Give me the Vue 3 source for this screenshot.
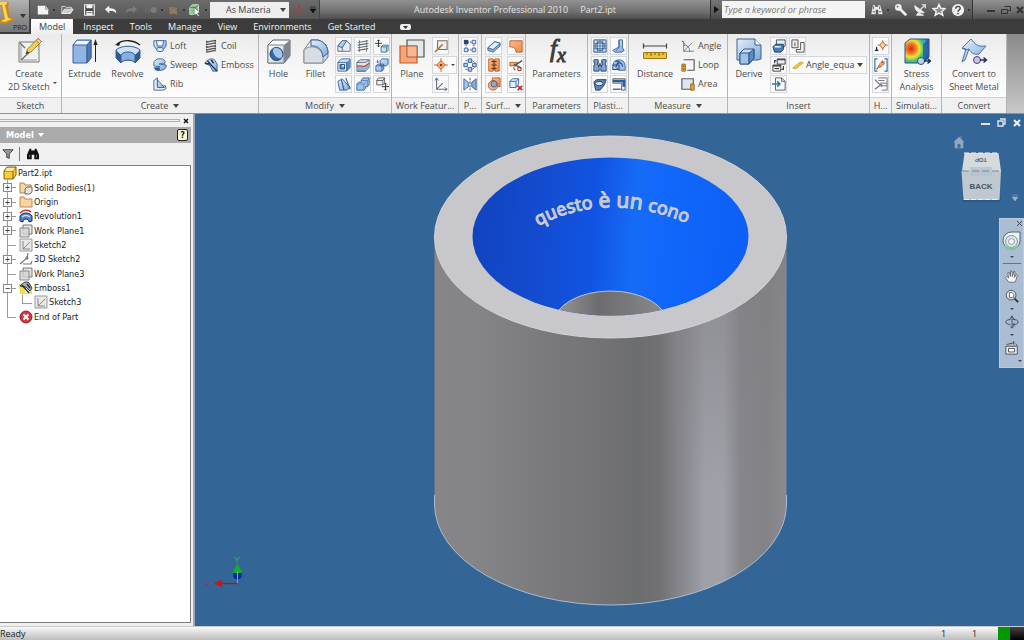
<script setup>
import { h } from 'vue'

const Icon = (props) =>
  h('svg', { class: 'icon', width: props.size || 16, height: props.size || 16, 'aria-hidden': 'true' }, [
    h('use', { href: '#i-' + props.name })
  ])
Icon.props = ['name', 'size']

const quick = ['new', 'open', 'save', 'undo', 'redo', 'link', 'update', 'select']
const tabs = ['Model', 'Inspect', 'Tools', 'Manage', 'View', 'Environments', 'Get Started']
const info = [
  ['find', 'Search'],
  ['key', 'Subscription'],
  ['dish', 'Communication'],
  ['star', 'Favorites'],
  ['help', 'Help']
]

const panels = [
  { id: 'sketch', title: 'Sketch', big: [{ icon: 'sketch', lines: ['Create', '2D Sketch'], drop: true }] },
  {
    id: 'create',
    title: 'Create',
    more: true,
    big: [
      { icon: 'extrude', lines: ['Extrude'] },
      { icon: 'revolve', lines: ['Revolve'] }
    ],
    rows: [
      ['loft', 'Loft'],
      ['sweep', 'Sweep'],
      ['rib', 'Rib'],
      ['coil', 'Coil'],
      ['emboss', 'Emboss']
    ]
  },
  {
    id: 'modify',
    title: 'Modify',
    more: true,
    big: [
      { icon: 'hole', lines: ['Hole'] },
      { icon: 'fillet', lines: ['Fillet'] }
    ],
    small: ['chamfer', 'shell', 'draft', 'thread', 'split', 'combine', 'move', 'copy', 'movebody']
  },
  {
    id: 'work',
    title: 'Work Featur...',
    big: [{ icon: 'plane', lines: ['Plane'] }],
    small: ['axis', 'point', 'ucs']
  },
  { id: 'pattern', title: 'P...', small: ['rect', 'circ', 'mirror'] },
  { id: 'surface', title: 'Surf...', more: true, small: ['thicken', 'stitch', 'sculpt', 'patch', 'trim', 'delface'] },
  { id: 'params', title: 'Parameters', big: [{ icon: 'fx', lines: ['Parameters'] }] },
  { id: 'plastic', title: 'Plasti...', small: ['grill', 'boss', 'rest', 'snap', 'rule', 'lip'] },
  {
    id: 'measure',
    title: 'Measure',
    more: true,
    big: [{ icon: 'distance', lines: ['Distance'] }],
    rows: [
      ['angle', 'Angle'],
      ['loop', 'Loop'],
      ['area', 'Area']
    ]
  },
  {
    id: 'insert',
    title: 'Insert',
    big: [{ icon: 'derive', lines: ['Derive'] }],
    small: ['place', 'objects', 'import'],
    combo: true
  },
  { id: 'harness', title: 'H...', small: ['pin', 'harn', 'props'] },
  { id: 'sim', title: 'Simulati...', big: [{ icon: 'stress', lines: ['Stress', 'Analysis'] }] },
  { id: 'convert', title: 'Convert', big: [{ icon: 'convert', lines: ['Convert to', 'Sheet Metal'] }] }
]

const tree = [
  { icon: 't-part', text: 'Part2.ipt', level: 0 },
  { icon: 't-solid', text: 'Solid Bodies(1)', level: 1, box: '+' },
  { icon: 't-folder', text: 'Origin', level: 1, box: '+' },
  { icon: 't-rev', text: 'Revolution1', level: 1, box: '+' },
  { icon: 't-plane', text: 'Work Plane1', level: 1, box: '+' },
  { icon: 't-sketch', text: 'Sketch2', level: 1 },
  { icon: 't-3d', text: '3D Sketch2', level: 1, box: '+' },
  { icon: 't-plane', text: 'Work Plane3', level: 1 },
  { icon: 't-emboss', text: 'Emboss1', level: 1, box: '-' },
  { icon: 't-sketch', text: 'Sketch3', level: 2 },
  { icon: 't-end', text: 'End of Part', level: 1, last: true }
]
</script>

<template>
  <div class="app">
    <svg class="defs" width="0" height="0" aria-hidden="true">
      <defs>
        <linearGradient id="gb" x1="0" y1="0" x2="1" y2="1"><stop offset="0" stop-color="#e4f0fb" /><stop offset="1" stop-color="#7ea8d8" /></linearGradient>
        <linearGradient id="gw" x1="0" y1="0" x2="1" y2="1"><stop offset="0" stop-color="#fff" /><stop offset="1" stop-color="#c4ccd6" /></linearGradient>
        <linearGradient id="go" x1="0" y1="0" x2="1" y2="1"><stop offset="0" stop-color="#f9bc90" /><stop offset="1" stop-color="#f08a4c" /></linearGradient>
        <radialGradient id="gs" cx=".25" cy=".4" r=".8"><stop offset="0" stop-color="#d8281c" /><stop offset=".25" stop-color="#ee7a22" /><stop offset=".45" stop-color="#f2e23a" /><stop offset=".65" stop-color="#4cc45e" /><stop offset=".82" stop-color="#2e9fd8" /><stop offset="1" stop-color="#2a4fb4" /></radialGradient>
      </defs>

      <symbol id="i-new" viewBox="0 0 16 16"><path d="M2 3h9l3 4v6H2z" fill="#f4f4f4" /><path d="M11 3v4h3" fill="none" stroke="#888" /></symbol>
      <symbol id="i-open" viewBox="0 0 16 16"><path d="M2 12V4h4l1 1h6v2" fill="none" stroke="#ddd" /><path d="M2 12l3-5h10l-3 5z" fill="#ccc" stroke="#f4f4f4" /></symbol>
      <symbol id="i-save" viewBox="0 0 16 16"><path d="M3 2h11v12H3z" fill="#444" stroke="#eee" stroke-width="1.4" /><path d="M5 2h7v4H5zM5 9h7v5H5z" fill="#f4f4f4" /><path d="M6 11h5" stroke="#555" /></symbol>
      <symbol id="i-undo" viewBox="0 0 16 16"><path d="M1 7l5-4v3c5 0 8 1 8 6-2-3-4-3-8-3v3z" fill="#f4f4f4" /></symbol>
      <symbol id="i-redo" viewBox="0 0 16 16"><path d="M14 7L9 3v3c-5 0-8 1-8 6 2-3 4-3 8-3v3z" fill="#7c7c7c" /></symbol>
      <symbol id="i-link" viewBox="0 0 16 16"><circle cx="4" cy="8" r="2.5" fill="none" stroke="#707070" /><circle cx="11" cy="8" r="3.5" fill="#7a7a7a" /></symbol>
      <symbol id="i-update" viewBox="0 0 16 16"><path d="M3 5l4-2 6 2v8H3z" fill="#80776a" stroke="#625848" /><path d="M3 5l10 8M13 5L5 13" stroke="#9a8767" /></symbol>
      <symbol id="i-select" viewBox="0 0 16 16"><path d="M2 5l3-3h7v8l-3 3H2z" fill="#8bc98a" stroke="#cfe8cf" /><path d="M2 5h7v8M9 5l3-3" fill="none" stroke="#3d8a3d" /><path d="M7 5l7 6-3 .3 2 3-1.500 1-2-3-2.500 1.500z" fill="#fff" stroke="#444" stroke-width=".6" /></symbol>
      <symbol id="i-find" viewBox="0 0 16 16"><path d="M3 2h3v2h3V2h3l3 11h-6V8H7v5H1z" fill="#eee" stroke="#444" stroke-width=".6" /><path d="M3 10h3M10 10h3M4 4v3M11 4v3" stroke="#555" /></symbol>
      <symbol id="i-key" viewBox="0 0 16 16"><circle cx="5" cy="5" r="3.800" fill="#eee" /><path d="M6 6l8 8" stroke="#eee" stroke-width="3" /><circle cx="4" cy="4" r="1" fill="#555" /></symbol>
      <symbol id="i-dish" viewBox="0 0 16 16"><path d="M2 3c0 6 5 9 11 8zM4 14l2-3 6 3z" fill="#eee" stroke="#eee" /><path d="M8 8l5-5M10 2h4v4" stroke="#eee" stroke-width="1.400" fill="none" /></symbol>
      <symbol id="i-star" viewBox="0 0 16 16"><path d="M8 1.500l2 4.500 5 .4-3.800 3.200L12.400 14 8 11.500 3.600 14l1.200-4.400L1 6.400 6 6z" fill="#888" stroke="#f4f4f4" stroke-width="1.600" /></symbol>
      <symbol id="i-help" viewBox="0 0 16 16"><circle cx="8" cy="8" r="7" fill="#f0f0f0" /><path d="M5.500 6.500C5.500 3 10.500 3 10.500 6c0 2-2.500 2-2.500 4" fill="none" stroke="#444" stroke-width="1.600" /><circle cx="8" cy="12" r="1" fill="#444" /></symbol>

      <symbol id="i-sketch" viewBox="0 0 28 28"><path d="M4 5h20v20H4z" fill="#f0f1f1" stroke="#777" /><path d="M6 8v15h16" fill="none" stroke="#999" /><path d="M6 23L20 10M5 6l5 5" stroke="#5b6e66" stroke-width="1.200" fill="none" /><path d="M11 17l1.500-5L23 1.500l3.500 3L16 15z" fill="#f7ce54" stroke="#876b28" stroke-width=".8" /><path d="M23 1.500l3.500 3-2 2-3.500-3z" fill="#f6d5a5" stroke="#876b28" stroke-width=".8" /><path d="M11 17l.8-3 2.500 1.800z" fill="#333" /></symbol>
      <symbol id="i-extrude" viewBox="0 0 28 28"><path d="M2 8l4-5h14v18l-4 5H2z" fill="#8fb5e2" stroke="#3d659e" /><path d="M3 8l3-4h13l-3 4z" fill="#edf5fd" /><path d="M16 8l4-5v18l-4 5z" fill="#4c78b4" stroke="#3d659e" /><path d="M2 8h14v18" fill="none" stroke="#3d659e" /><path d="M24.500 25V6" stroke="#222" /><path d="M24.500 2l-2 6h4z" fill="#222" /></symbol>
      <symbol id="i-revolve" viewBox="0 0 28 28"><path d="M2 13c5-5 19-5 24 0v8l-5 5c-1-4-13-4-14 0l-5-5z" fill="#cfe2f5" stroke="#345f99" /><path d="M7 18c2-4 12-4 14 0v8c-1-4-13-4-14 0z" fill="#89afdd" stroke="#345f99" /><path d="M2 13l5 5v8l-5-5zM26 13l-5 5v8l5-5z" fill="#315b96" /><path d="M3 7C10 2 20 3 26 8" fill="none" stroke="#222" stroke-width="1.300" /><path d="M1 8l6-4-2 5z" fill="#222" /></symbol>
      <symbol id="i-hole" viewBox="0 0 28 28"><path d="M3 8l5-5h17v16l-6 7H3z" fill="#fbfbfc" stroke="#56616f" /><path d="M3 8h16v18H3z" fill="url(#gw)" stroke="#7b8490" /><path d="M19 8l6-5v16l-6 7z" fill="#7e868f" /><circle cx="11.500" cy="17" r="6.500" fill="#3867a9" stroke="#1f4272" /><path d="M8 13c0 5 4 9 8 8 3-3 1-9-4-10-2 0-4 0-4 2z" fill="#a6c5e8" /></symbol>
      <symbol id="i-fillet" viewBox="0 0 28 28"><path d="M2 13L9 3h7c7 2 10 7 10 13v4l-5 6H2z" fill="url(#gw)" stroke="#707984" /><path d="M2 13c6-6 17-3 19 5v8H2z" fill="#d8dde4" stroke="#89919b" /><path d="M9 3h7c7 2 10 7 10 13l-5 4C20 13 16 8 9 9z" fill="url(#gb)" stroke="#345f99" /></symbol>
      <symbol id="i-plane" viewBox="0 0 28 28"><path d="M9 3h17v17H9z" fill="#e3e8ea" stroke="#4c5358" stroke-width="1.200" /><path d="M2 9h17v17H2z" fill="#f69a66" fill-opacity=".88" stroke="#c85c20" stroke-width="1.200" /><path d="M9 9h10v11H9z" fill="#fab68c" stroke="#7d4a34" stroke-width=".7" /></symbol>
      <symbol id="i-distance" viewBox="0 0 28 28"><path d="M3 9h22M2.500 6.500v5M25.500 6.500v5" stroke="#444" stroke-width="1.200" /><path d="M2.500 15.500h23v6h-23z" fill="#edc33c" stroke="#9e7a1a" /><path d="M6 16v2M10 16v3M14 16v2M18 16v3M22 16v2" stroke="#7a5d12" /></symbol>
      <symbol id="i-derive" viewBox="0 0 28 28"><path d="M2 2h18l6 6v14l-3 1H2z" fill="url(#gb)" stroke="#3e6188" /><path d="M20 2v6h6" fill="#fff" stroke="#3e6188" /><path d="M5 16l4-4h10v9l-5 6H5z" fill="#c7ddf4" stroke="#32578a" /><path d="M5 16h9v11H5z" fill="#a0c2e8" stroke="#32578a" /><path d="M14 16l5-4v9l-5 6z" fill="#5b88c0" stroke="#32578a" /></symbol>
      <symbol id="i-stress" viewBox="0 0 28 28"><path d="M2 6l5-4h19v18l-6 6H2z" fill="url(#gs)" stroke="#34518a" /><path d="M20 7l6-5v18l-6 6z" fill="#2455a0" opacity=".75" /><circle cx="18" cy="24" r="3.500" fill="#b9d2ec" stroke="#38517a" /><path d="M21 24h6M24.500 21.500L27.500 24l-3 2.500" fill="none" stroke="#16305a" stroke-width="1.500" /></symbol>
      <symbol id="i-convert" viewBox="0 0 28 28"><path d="M2 11L11 2c4 5 6 8 15 7l-7 8c-5 1-8-1-10-5L5 23l-3 2 4-13z" fill="url(#gb)" stroke="#4a71a6" /><path d="M2 11l4 2 3-1" fill="none" stroke="#4a71a6" /><circle cx="17" cy="23" r="3.500" fill="#cbc3ea" stroke="#483f86" /><path d="M20 23h6M23.500 20.500L26.500 23l-3 2.500" fill="none" stroke="#2e2766" stroke-width="1.500" /></symbol>

      <symbol id="i-loft" viewBox="0 0 16 16"><path d="M1 2h14v6l-4 5H5L1 8z" fill="url(#gb)" stroke="#345f99" /><path d="M4 2h8l-1 6H5z" fill="#fff" stroke="#345f99" /><ellipse cx="8" cy="12" rx="4" ry="2.500" fill="#d6e6f6" stroke="#345f99" /></symbol>
      <symbol id="i-sweep" viewBox="0 0 16 16"><path d="M1 6c0-6 11-7 13-2l-1 3c-3-2-6 0-6 0l8 1c1 5-5 7-10 6l-4-3c4 1 7 0 7-1L1 9z" fill="url(#gb)" stroke="#345f99" /><ellipse cx="5" cy="12.500" rx="3" ry="2" fill="#315b96" /></symbol>
      <symbol id="i-rib" viewBox="0 0 16 16"><path d="M1 4l4-3v9l9 0 1 3-3 2H1z" fill="#e6edf5" stroke="#345f99" /><path d="M5 3l8 9H5z" fill="url(#gb)" stroke="#345f99" /></symbol>
      <symbol id="i-coil" viewBox="0 0 16 16"><path d="M3 3.500l10-2M3 6.500l10-2M3 9.500l10-2M3 12.500l10-2M3 15l10-2" stroke="#555" stroke-width="1.500" /><path d="M3 2v13M13 1v13" stroke="#444" stroke-width="1.500" stroke-dasharray="2 1" /></symbol>
      <symbol id="i-emboss" viewBox="0 0 16 16"><path d="M1 6c3-5 8-6 11-4l3 5v8h-5L7 9z" fill="url(#gb)" stroke="#345f99" /><path d="M1 6l6 1 8 8M4 3l4 5M8 2l3 4" stroke="#1d3658" stroke-width="1.600" fill="none" /></symbol>
      <symbol id="i-chamfer" viewBox="0 0 16 16"><path d="M1 8l5-6h5l4 4v8H1z" fill="#e9edf2" stroke="#51627a" /><path d="M1 8l5-6h5L6 10z" fill="url(#gb)" stroke="#345f99" /><path d="M6 10v4" stroke="#51627a" /></symbol>
      <symbol id="i-thread" viewBox="0 0 16 16"><path d="M4 1v14M12 1v14" stroke="#888" /><path d="M2 4l12-2M2 7l12-2M2 10l12-2M2 13l12-2" stroke="#626b76" stroke-width="1.200" /></symbol>
      <symbol id="i-move" viewBox="0 0 16 16"><path d="M4 1v8M0 5h8M2.500 2.500L4 1l1.500 1.500M2.500 7.500L4 9l1.500-1.500" stroke="#222" fill="none" /><path d="M7 9l2-2h6v6l-2 2H7z" fill="#c8e4f0" stroke="#32768e" /><path d="M7 9h6v6M13 9l2-2" fill="none" stroke="#32768e" /></symbol>
      <symbol id="i-shell" viewBox="0 0 16 16"><path d="M1 5l4-4h10v10l-4 4H1z" fill="#d5e4f5" stroke="#345f99" /><path d="M11 5l4-4v10l-4 4z" fill="#5b88c0" /><path d="M1 5h10v10" fill="none" stroke="#345f99" /><path d="M3.500 7.500h5v5h-5z" fill="#5f8cc6" stroke="#1f4272" /><path d="M6 8h2v2H6z" fill="#fff" /></symbol>
      <symbol id="i-split" viewBox="0 0 16 16"><path d="M1 5l4-3h10v9l-4 4H1z" fill="#dfe5ec" stroke="#51627a" /><path d="M1 11c4-3 6 1 10-1l4-4v5l-4 4H1z" fill="#8db3dd" /><path d="M1 10c4-3 6 1 10-1l4-3" fill="none" stroke="#c04c30" stroke-width="1.500" /><path d="M1 5h10l4-3M1 15h10" fill="none" stroke="#51627a" /></symbol>
      <symbol id="i-copy" viewBox="0 0 16 16"><path d="M6 3l2-2h7v6l-2 2H6zM1 9l2-2h7v6l-2 2H1z" fill="url(#gb)" stroke="#345f99" /><path d="M1 9h7v6M8 9l2-2M3 2v3M1.500 4L3 5.500 4.500 4" fill="none" stroke="#345f99" /></symbol>
      <symbol id="i-draft" viewBox="0 0 16 16"><path d="M1 5l5-3 9 10-4 3H3z" fill="url(#gb)" stroke="#345f99" /><path d="M5 3l3 12M10 1l5 13" stroke="#345f99" stroke-width="1.300" /></symbol>
      <symbol id="i-combine" viewBox="0 0 16 16"><path d="M1 8l2-2h3V4l2-3h7v8l-2 2h-2v2l-2 2H1z" fill="#a2c3e8" stroke="#345f99" /><path d="M1 8h8v7M6 4h7v7M9 8l2-2M13 4l2-2" fill="none" stroke="#345f99" opacity=".6" /></symbol>
      <symbol id="i-movebody" viewBox="0 0 16 16"><path d="M2 4l2-3h7v6l-2 2H2z" fill="#f3f3f3" stroke="#555" /><path d="M2 4h7v5M9 4l2-3" stroke="#555" fill="none" /><path d="M12 7v8M8 11h8M10.500 8.500L12 7l1.500 1.500M10.500 13.500L12 15l1.500-1.500" stroke="#222" fill="none" /></symbol>
      <symbol id="i-axis" viewBox="0 0 16 16"><path d="M4 2h11v10H4z" fill="#f1ede9" stroke="#73706c" stroke-width="1.200" /><path d="M1 15L10 6" stroke="#a97657" stroke-width="1.800" /></symbol>
      <symbol id="i-point" viewBox="0 0 16 16"><path d="M8 0v16M0 8h16" stroke="#cc5b1c" /><path d="M8 3l5 5-5 5-5-5z" fill="#f6b27e" stroke="#b8541c" /><circle cx="8" cy="8" r="1.500" fill="#8a3b10" /></symbol>
      <symbol id="i-ucs" viewBox="0 0 16 16"><path d="M3 1v13h12M3 14l7-7" fill="none" stroke="#667" stroke-width="1.200" /><path d="M1 4l2-3 2 3M12 12l3 2-3 2" fill="none" stroke="#3d6b93" /></symbol>
      <symbol id="i-rect" viewBox="0 0 16 16"><path d="M5 3.500h6M5 12.500h6M3.500 6v4M12.500 6v4" stroke="#446" stroke-dasharray="2 1" /><path d="M1 1h5v5H1z" fill="#24477c" /><path d="M10.500 1.500h4v4h-4zM1.500 10.500h4v4h-4zM10.500 10.500h4v4h-4z" fill="#d5e5f6" stroke="#345f99" /></symbol>
      <symbol id="i-circ" viewBox="0 0 16 16"><g fill="#b4d0ee" stroke="#27508b"><path d="M6 1h4v4H6zM6 11h4v4H6zM1 6h4v4H1zM11 6h4v4h-4z" /><path d="M3 3l2 0M11 3l2 2M3 13l2 0M11 13l2-2" /></g></symbol>
      <symbol id="i-mirror" viewBox="0 0 16 16"><path d="M1 2l5 4v5l-5 4z" fill="#a8c8ea" stroke="#345f99" /><path d="M15 2l-5 4v5l5 4z" fill="#86add9" stroke="#345f99" /><path d="M8 1v14" stroke="#444" stroke-dasharray="3 1" /></symbol>
      <symbol id="i-thicken" viewBox="0 0 16 16"><path d="M1 10l8-7 6 2v3l-8 7-6-2z" fill="#8fb5e2" stroke="#345f99" /><path d="M1 10l8-7 6 2-8 7z" fill="#e3effa" stroke="#345f99" /></symbol>
      <symbol id="i-patch" viewBox="0 0 16 16"><path d="M1 2h14v13H8c0-4-2-6-7-6z" fill="url(#go)" stroke="#b65a22" /></symbol>
      <symbol id="i-stitch" viewBox="0 0 16 16"><path d="M2 1h5v14H2zM9 1h5v14H9z" fill="url(#go)" stroke="#b65a22" /><path d="M5 4h6M5 8h6M5 12h6M8 2v12" stroke="#5e2b0e" /></symbol>
      <symbol id="i-trim" viewBox="0 0 16 16"><path d="M1 5h9l-2 4H1z" fill="url(#go)" stroke="#b65a22" /><path d="M6 9l9-6M6 7l8 5" stroke="#555" stroke-width="1.600" /><circle cx="12" cy="12.500" r="2" fill="none" stroke="#b03c22" stroke-width="1.300" /><path d="M5 11l2 3" stroke="#b03c22" stroke-width="1.300" /></symbol>
      <symbol id="i-sculpt" viewBox="0 0 16 16"><path d="M6 1h9v10H6z" fill="url(#go)" stroke="#b65a22" /><circle cx="7" cy="9.500" r="5.500" fill="#f4ae80" stroke="#b65a22" /><circle cx="8" cy="8" r="3.500" fill="#8fa9ce" stroke="#345f99" /></symbol>
      <symbol id="i-delface" viewBox="0 0 16 16"><path d="M1 5l3-3h7v6l-3 4H1z" fill="#e2eefa" stroke="#345f99" /><path d="M1 5h7v7M8 5l3-3" fill="none" stroke="#345f99" /><path d="M10 10l5 5M15 10l-5 5" stroke="#c22" stroke-width="2" /></symbol>
      <symbol id="i-grill" viewBox="0 0 16 16"><path d="M1 1h14v14H1z" fill="#cfe0f3" stroke="#24477c" /><circle cx="8" cy="8" r="5" fill="none" stroke="#24477c" /><path d="M1 5h14M1 8h14M1 11h14M5 1v14M8 1v14M11 1v14" stroke="#345f99" stroke-width=".8" /></symbol>
      <symbol id="i-boss" viewBox="0 0 16 16"><path d="M1 2h5v3H5v3h2v7H1V8h1V5H1zM10 2h5v3h-1v3h1v7H9V8h2V5h-1z" fill="#7fa6d6" stroke="#1f4272" /><path d="M6 5l4 5M10 5l-4 5" stroke="#222" /></symbol>
      <symbol id="i-rest" viewBox="0 0 16 16"><path d="M1 6l3-3h11l-2 6-5 6H3z" fill="#5d86bd" stroke="#1f3a62" /><ellipse cx="7" cy="7.500" rx="4.500" ry="2.500" fill="#d3e3f4" stroke="#1f3a62" /></symbol>
      <symbol id="i-snap" viewBox="0 0 16 16"><path d="M8 1h4v9l2 3-3 2H3l-2-2 7-4z" fill="url(#gb)" stroke="#345f99" /><path d="M8 1v9l-4 4" stroke="#345f99" fill="none" /></symbol>
      <symbol id="i-rule" viewBox="0 0 16 16"><path d="M1 8C2 0 15 0 15 9v5H8z" fill="#a2c3e8" stroke="#345f99" /><path d="M5 10c0-6 7-6 7 0M1 8h7v6M1 8v5h7M4 3l5 2" fill="none" stroke="#27508b" stroke-width="1.300" /></symbol>
      <symbol id="i-lip" viewBox="0 0 16 16"><path d="M1 2h14v13h-4V7H1z" fill="#e8eef6" stroke="#555" /><path d="M1 3h14v3H1zM12 6h3v5h-3z" fill="#2c5da3" /><path d="M1 14h9" stroke="#555" stroke-width="1.500" /></symbol>
      <symbol id="i-angle" viewBox="0 0 16 16"><path d="M3 2v12h12M3 14L13 4" fill="none" stroke="#778" /><path d="M3 7c4 0 7 3 7 7M1 2l6 6" fill="none" stroke="#555" stroke-dasharray="2 1" /></symbol>
      <symbol id="i-loop" viewBox="0 0 16 16"><path d="M3 2h12v12H7" fill="none" stroke="#556" stroke-width="1.300" /><path d="M1 7h4v8H1z" fill="#e5a73a" stroke="#8b5f15" /><path d="M2 9.500h2M2 12.500h2" stroke="#6b4810" /></symbol>
      <symbol id="i-area" viewBox="0 0 16 16"><path d="M1 2h13v12H1z" fill="#dfe6ee" stroke="#556" stroke-width="1.300" /><path d="M11 8h4v7h-4z" fill="#e5a73a" stroke="#8b5f15" /></symbol>
      <symbol id="i-place" viewBox="0 0 16 16"><path d="M5 1h10v7l-3 2H5z" fill="#e2eefa" stroke="#345" /><path d="M1 9l3-3h9v6l-3 3H3z" fill="#4a7bb8" stroke="#1f3a62" /><path d="M3 9h7" stroke="#fff" stroke-width="1.500" /></symbol>
      <symbol id="i-ifeat" viewBox="0 0 16 16"><path d="M1 1h7v9H1z" fill="#eee" stroke="#444" /><path d="M4.500 4v4" stroke="#333" /><path d="M11 4h4v11H6v-3h5z" fill="#f6f6f6" stroke="#444" /></symbol>
      <symbol id="i-objects" viewBox="0 0 16 16"><path d="M6 1h9v6H6zM1 8h9v7H1z" fill="#eee" stroke="#333" /><path d="M1 9h9M6 2h9M3 12h5M13 9v4h-2M3 6V3h2" stroke="#333" fill="none" stroke-width="1.300" /></symbol>
      <symbol id="i-import" viewBox="0 0 16 16"><path d="M4 1h7l4 4v10H4z" fill="#f6f6f6" stroke="#556" /><path d="M11 1v4h4" fill="none" stroke="#556" /><path d="M0 8h8M6 5l3 3-3 3" fill="none" stroke="#247bb8" stroke-width="1.800" /></symbol>
      <symbol id="i-pencil" viewBox="0 0 16 16"><path d="M1 12l10-8 4 1-10 8z" fill="#f2c83a" stroke="#c79a1e" /></symbol>
      <symbol id="i-pin" viewBox="0 0 16 16"><path d="M10 1v12M4 7h12" stroke="#c96a36" /><path d="M10 3l3.500 4-3.500 4-3.500-4z" fill="#f6d0b4" stroke="#b8541c" /><path d="M3 9v4M1 13h4" stroke="#222" stroke-width="1.400" /></symbol>
      <symbol id="i-harn" viewBox="0 0 16 16"><path d="M4 1H1v14h3M12 1h3v14h-3" fill="none" stroke="#24749a" stroke-width="1.300" /><path d="M3 13l7-10M7 7l5-3M6 11l6-5" stroke="#b8541c" stroke-width="1.300" /><circle cx="8" cy="7" r="2" fill="#f0a070" /></symbol>
      <symbol id="i-props" viewBox="0 0 16 16"><path d="M5 1h10v14H9M5 4h7M7 7h8M8 10h7" stroke="#667" fill="none" /><path d="M1 3l8 8M1 14l8-6" stroke="#777a8c" stroke-width="1.600" /></symbol>

      <symbol id="i-t-part" viewBox="0 0 14 14"><path d="M1 5l3-4h9v8l-3 4H1z" fill="#f8cf3a" stroke="#7b6212" /><path d="M1 5h9v8M10 5l3-4" fill="none" stroke="#7b6212" /><path d="M2 5l2-3h8l-2 3z" fill="#fdeb9a" /></symbol>
      <symbol id="i-t-solid" viewBox="0 0 14 14"><path d="M1 12V2h4l1 2h6v8z" fill="#f5d9a4" stroke="#a98347" /><path d="M6 8l2-2h5v5l-2 2H6z" fill="#e8e6da" stroke="#667" /></symbol>
      <symbol id="i-t-folder" viewBox="0 0 14 14"><path d="M1 12V2h4l1 2h7v8z" fill="#f7d3a0" stroke="#b98a50" /></symbol>
      <symbol id="i-t-rev" viewBox="0 0 14 14"><path d="M1 7c2-4 10-4 12 0v5l-3 1c0-4-6-4-6 0l-3-1z" fill="#4f83c6" stroke="#1a315c" /><path d="M3 8c2-2 6-2 8 0" stroke="#c8dcf2" stroke-width="1.500" fill="none" /><path d="M1 4c3-3 8-4 11-1" stroke="#c3312a" stroke-width="1.600" fill="none" /></symbol>
      <symbol id="i-t-plane" viewBox="0 0 14 14"><path d="M4 1h9v9H4z" fill="#e4e4e4" stroke="#777" /><path d="M1 4h9v9H1z" fill="#d5d5d5" fill-opacity=".8" stroke="#888" /></symbol>
      <symbol id="i-t-sketch" viewBox="0 0 14 14"><path d="M1 1h12v12H1z" fill="#e8e8e8" stroke="#999" /><path d="M4 3v8h7M4 11l7-7" fill="none" stroke="#888" /></symbol>
      <symbol id="i-t-3d" viewBox="0 0 14 14"><path d="M1 12l7-6 1-5M4 12h8l1-3" fill="none" stroke="#777" stroke-width="1.200" /><circle cx="8" cy="6" r="1.500" fill="#777" /></symbol>
      <symbol id="i-t-emboss" viewBox="0 0 14 14"><path d="M0 3h4l3 10H1zM7 13h6V9z" fill="#f4dd3c" /><path d="M1 5c3-4 7-5 9-3l3 5-2 3-4-4z" stroke="#333" fill="#a9b4bf" /><path d="M3 4l7 8M8 3l3 4" stroke="#222" stroke-width="1.300" /></symbol>
      <symbol id="i-t-end" viewBox="0 0 14 14"><circle cx="7" cy="7" r="6" fill="#cf3745" stroke="#8a2530" /><path d="M4.500 4.500l5 5M9.500 4.500l-5 5" stroke="#fff" stroke-width="2" /></symbol>

      <symbol id="i-filter" viewBox="0 0 14 14"><path d="M1 2h12L8.500 7v5l-3-1V7z" fill="#999" stroke="#333" /></symbol>
      <symbol id="i-bino" viewBox="0 0 14 14"><path d="M3 1h2v2h4V1h2l3 7v5H8.500V8h-3v5H0V8z" fill="#111" /><path d="M3 8v3M11 8v3" stroke="#888" /></symbol>

      <symbol id="i-wheel" viewBox="0 0 20 20"><path d="M10 1h8v9a8.500 8.500 0 1 1-8-9z" fill="#eef2f4" stroke="#51616f" /><circle cx="9.500" cy="10.500" r="6" fill="#dfe7ea" stroke="#7b8d95" /><circle cx="9.500" cy="10.500" r="3" fill="#eef3f4" stroke="#8d9da4" /><path d="M3 15c3 4 10 4 13 0" stroke="#7fc48a" stroke-width="2" fill="none" /></symbol>
      <symbol id="i-hand" viewBox="0 0 16 16"><path d="M5 14L1.500 9l1-1L5 9.500 4 4l1.300-.5L7 8V2h1.500l.5 6 1.500-5.500 1.300.5-.8 6 2-3 1.200.7-2.200 7.300z" fill="#f6f8fa" stroke="#444" stroke-width=".7" /></symbol>
      <symbol id="i-zoom" viewBox="0 0 16 16"><circle cx="7" cy="7" r="5.500" fill="#e8eef3" stroke="#444" /><path d="M5 4h3l2 2v4H5z" fill="#fff" stroke="#555" /><path d="M11 11l4 4" stroke="#333" stroke-width="2.200" /></symbol>
      <symbol id="i-orbit" viewBox="0 0 16 16"><path d="M8 1v14M5 6l3-5 3 5M6 13l2 2 2-2" fill="none" stroke="#445" /><path d="M9 5c8 0 8 6 0 6M11 9l-2 2 2 2M6 5c-7 1-7 5 0 6" fill="none" stroke="#445" /></symbol>
      <symbol id="i-look" viewBox="0 0 16 16"><path d="M1 6h13v9H1z" fill="#e8eef3" stroke="#444" /><path d="M4 8.500h7v4H4z" fill="#fff" stroke="#444" /><path d="M2 4l8-2M10 0v4M12 3l2 2" stroke="#444" fill="none" /></symbol>
    </svg>

    <header class="top">
      <button class="appbtn" aria-label="Application menu">
        <svg width="29" height="32" viewBox="0 0 29 32" aria-hidden="true">
          <path d="M0 2h8l1 2-1 2 2 11 3 1v3l-8 3-5-1v-3l4-2L1 6H0z" fill="#c98714" />
          <path d="M0 2h7v2L5 5l3 13 4 1-7 3-4-1 4-2L2 5H0z" fill="#fbd266" />
          <path d="M20 14h6l-3 4z" fill="#333" />
        </svg>
        <span>PRO</span>
      </button>
      <div class="titlebar">
        <div class="qat">
          <button v-for="q in quick" :key="q" :aria-label="q"><Icon :name="q" size="14" /><i v-if="q !== 'open' && q !== 'save' && q !== 'undo' && q !== 'redo'" class="dot"></i></button>
          <div class="drop mat"><select aria-label="Material"><option>As Materia</option></select><i class="arrow"></i></div>
          <button class="cross" aria-label="Adjust">
            <svg width="12" height="12" viewBox="0 0 12 12"><path d="M6 0v12M0 6h12" stroke="#8f4a45" stroke-width="2" stroke-dasharray="5 2" /></svg>
          </button>
          <button class="cust" aria-label="Customize">
            <svg width="8" height="8" viewBox="0 0 8 8"><path d="M1 1h6M1 3h6L4 7z" fill="#111" stroke="#111" stroke-width=".6" /></svg>
          </button>
        </div>
        <h1><span>Autodesk Inventor Professional 2010</span><span>Part2.ipt</span></h1>
        <div class="info">
          <button class="tri" aria-label="Collapse search"><svg width="5" height="7" viewBox="0 0 5 7"><path d="M0 0l5 3.500L0 7z" fill="#111" /></svg></button>
          <input type="text" aria-label="Search" placeholder="Type a keyword or phrase" />
          <button v-for="i in info" :key="i[0]" :aria-label="i[1]" :class="i[0]"><Icon :name="i[0]" size="14" /><i v-if="i[0] === 'find' || i[0] === 'help'" class="dot"></i></button>
        </div>
        <div class="wc">
          <button aria-label="Minimize"><svg width="9" height="9" viewBox="0 0 9 9"><path d="M0 6h8" stroke="#333" stroke-width="2" /></svg></button>
          <button aria-label="Restore"><svg width="10" height="10" viewBox="0 0 10 10"><path d="M3.500 1.500h6v4h-3M.5 4.500h6v4h-6z" fill="none" stroke="#333" /></svg></button>
          <button aria-label="Close"><svg width="8" height="8" viewBox="0 0 8 8"><path d="M1 1l6 6M7 1L1 7" stroke="#333" stroke-width="2" /></svg></button>
        </div>
      </div>
      <nav class="tabs">
        <button v-for="(t, i) in tabs" :key="t" :class="{ on: i === 0 }">{{ t }}</button>
        <button class="min" aria-label="Minimize ribbon"><svg width="11" height="6" viewBox="0 0 11 6"><rect width="11" height="6" rx="2" fill="#eee" /><path d="M3 2h5L5.500 5z" fill="#333" /></svg></button>
      </nav>
    </header>

    <div class="ribbon">
      <section v-for="p in panels" :key="p.id" :class="['panel', p.id]">
        <div class="body">
          <button v-for="b in p.big" :key="b.icon" :class="['big', b.icon]">
            <svg v-if="b.icon === 'fx'" width="28" height="28" viewBox="0 0 28 28" aria-hidden="true"><text x="7" y="20" font-size="25">f</text><text x="14" y="25" font-size="20">x</text></svg>
            <Icon v-else :name="b.icon" size="28" />
            <span v-for="l in b.lines" :key="l">{{ l }}</span>
            <i v-if="b.drop" class="arrow"></i>
          </button>
          <div v-if="p.rows" class="rows">
            <button v-for="r in p.rows" :key="r[0]"><Icon :name="r[0]" size="14" /><span>{{ r[1] }}</span></button>
          </div>
          <div v-if="p.small" class="smalls">
            <button v-for="s in p.small" :key="s" :aria-label="s" :class="s"><Icon :name="s" size="14" /><i v-if="s === 'point'" class="arrow"></i></button>
          </div>
          <div v-if="p.combo" class="combo">
            <button aria-label="Insert iFeature" class="sq"><Icon name="ifeat" size="14" /></button>
            <div class="drop pick"><Icon name="pencil" size="12" /><select aria-label="iMate"><option>Angle_equa</option></select><i class="arrow"></i></div>
          </div>
        </div>
        <h2>{{ p.title }}<i v-if="p.more" class="arrow"></i></h2>
      </section>
      <div class="rest-fill"></div>
    </div>

    <main>
      <aside>
        <div class="grip"><span></span><button aria-label="Close browser"><svg width="6" height="6" viewBox="0 0 6 6"><path d="M1 1l4 4M5 1L1 5" stroke="#111" stroke-width="1.500" /></svg></button></div>
        <div class="mhead"><button class="mtitle">Model<i class="arrow"></i></button><button class="q" aria-label="Help">?</button></div>
        <div class="mtools">
          <button aria-label="Filter"><Icon name="filter" size="12" /></button>
          <button aria-label="Find"><Icon name="bino" size="12" /></button>
        </div>
        <div class="treebox">
          <ul class="tree">
            <li v-for="n in tree" :key="n.text" :class="['l' + n.level, { last: n.last }]">
              <button v-if="n.box" class="box" :aria-label="n.text">{{ n.box === '+' ? '+' : '−' }}</button>
              <Icon :name="n.icon" size="14" /><span>{{ n.text }}</span>
            </li>
          </ul>
        </div>
      </aside>

      <div class="view">
        <svg class="scene" viewBox="195 114 829 512" role="img" aria-label="Hollow cone part">
          <defs>
            <linearGradient id="side" x1="0" x2="1">
              <stop offset="0" stop-color="#868688" /><stop offset=".12" stop-color="#858587" /><stop offset=".3" stop-color="#7b7b7d" /><stop offset=".45" stop-color="#747477" /><stop offset=".58" stop-color="#6c6d6f" /><stop offset=".64" stop-color="#717174" /><stop offset=".7" stop-color="#86868d" /><stop offset=".77" stop-color="#a0a0a9" /><stop offset=".82" stop-color="#a0a0a9" /><stop offset=".87" stop-color="#86868b" /><stop offset=".94" stop-color="#828287" /><stop offset="1" stop-color="#8b8b90" />
            </linearGradient>
            <linearGradient id="shade" x1="0" y1="0" x2="0" y2="1"><stop offset="0" stop-color="#808084" stop-opacity=".7" /><stop offset="1" stop-color="#808084" stop-opacity="0" /></linearGradient>
            <linearGradient id="cone" x1="0" x2="1" y2=".04">
              <stop offset="0" stop-color="#1143bd" /><stop offset=".25" stop-color="#134bcf" /><stop offset=".46" stop-color="#1154e2" /><stop offset=".6" stop-color="#166bf6" /><stop offset=".7" stop-color="#1268fb" /><stop offset="1" stop-color="#0d5ff6" />
            </linearGradient>
            <linearGradient id="bore" x1="0" x2="1"><stop offset="0" stop-color="#98989a" /><stop offset=".4" stop-color="#6c6c6e" /><stop offset="1" stop-color="#8b8b8c" /></linearGradient>
            <clipPath id="mouth"><ellipse cx="610.500" cy="236.500" rx="138" ry="79" /></clipPath>
          </defs>
          <path d="M434.500 237V504a176 101 0 0 0 352 0V237z" fill="url(#side)" />
          <path d="M679 237h107v250H679z" fill="url(#shade)" />
          <path d="M434.500 495v9a176 101 0 0 0 352 0v-9" fill="none" stroke="#a9bccf" />
          <ellipse cx="610.500" cy="237" rx="176" ry="101" fill="#c7c7cc" stroke="#d5d5d6" />
          <ellipse cx="610.500" cy="236.500" rx="138" ry="79" fill="url(#cone)" />
          <ellipse cx="610.500" cy="324" rx="57" ry="33" fill="url(#bore)" stroke="#b9c3d8" clip-path="url(#mouth)" />
          <path id="arc" d="M538 226Q612 187 700 229" fill="none" />
          <text class="carve"><textPath href="#arc"><tspan font-size="18">questo</tspan><tspan font-size="21"> è un </tspan><tspan font-size="18">cono</tspan></textPath></text>
        </svg>

        <div class="docwc">
          <button aria-label="Minimize document"><svg width="9" height="9" viewBox="0 0 9 9"><path d="M0 6h9" stroke="#dde6ee" stroke-width="2" /></svg></button>
          <button aria-label="Restore document"><svg width="9" height="9" viewBox="0 0 9 9"><path d="M3 1h5v5H6M1 3h5v5H1z" fill="none" stroke="#dde6ee" stroke-width="1.400" /></svg></button>
          <button aria-label="Close document"><svg width="8" height="8" viewBox="0 0 8 8"><path d="M1 1l6 6M7 1L1 7" stroke="#eef3f7" stroke-width="2" /></svg></button>
        </div>

        <svg class="cube" width="72" height="76" viewBox="948 130 72 76" role="img" aria-label="View cube">
          <path d="M954 142l5-5 5 5h-1v6h-8v-6zM961 136v3" fill="#8ea7c0" stroke="#8ea7c0" stroke-width=".6" />
          <path d="M957.500 144h3v4h-3z" fill="#4a6f96" />
          <path d="M963 202l-1-6h39l-1 6z" fill="#27507c" opacity=".6" />
          <path d="M964.500 153h34l2.500 18h-39z" fill="#d4dade" />
          <path d="M961.500 171H1001l-1.500 29h-36z" fill="#c0c9d1" />
          <path d="M970 167h22v9h-22z" fill="#b4c0cb" opacity=".8" />
          <path d="M962 171h38" stroke="#76889a" stroke-dasharray="7 3" />
          <path d="M964 153h35M964 199.500h35" stroke="#eef2f4" stroke-dasharray="5 2" fill="none" />
          <text x="981" y="189" text-anchor="middle" font-size="8" font-weight="bold" fill="#4a545e">BACK</text>
          <text x="-981" y="-158" transform="rotate(180)" text-anchor="middle" font-size="6" font-weight="bold" fill="#59646e">TOP</text>
          <path d="M1012 195h6M1012 197h6l-3 4z" fill="#9db3ca" stroke="#9db3ca" stroke-width=".5" />
        </svg>

        <div class="navbar">
          <button class="nx" aria-label="Close navigation bar"><svg width="5" height="5" viewBox="0 0 5 5"><path d="M0 0l5 5M5 0L0 5" stroke="#445" /></svg></button>
          <button aria-label="Steering wheel"><Icon name="wheel" size="20" /></button>
          <i class="arrow"></i>
          <hr />
          <button aria-label="Pan"><Icon name="hand" size="15" /></button>
          <button aria-label="Zoom"><Icon name="zoom" size="14" /></button>
          <i class="arrow"></i>
          <button aria-label="Orbit"><Icon name="orbit" size="14" /></button>
          <i class="arrow"></i>
          <button aria-label="Look at"><Icon name="look" size="14" /></button>
          <i class="arrow end"></i>
        </div>

        <svg class="triad" width="44" height="34" viewBox="203 554 44 34" role="img" aria-label="Axes">
          <path d="M237 583.500h-16" stroke="#9c1c26" stroke-width="1.400" />
          <path d="M214 583.500l8-4v8z" fill="#d01414" />
          <text x="205" y="587" font-size="8" fill="#a8323e">X</text>
          <circle cx="237.500" cy="575" r="4.500" fill="#0b2f9a" />
          <path d="M237.500 563l5 10h-10z" fill="#17a82e" />
          <path d="M237.500 571v12" stroke="#7fa9b4" />
          <text x="234" y="563" font-size="9" fill="#2fae6c">Y</text>
        </svg>
      </div>
    </main>

    <footer>
      <span>Ready</span>
      <span class="n">1</span>
      <span class="n">1</span>
      <i class="green"></i><i class="dark"></i>
    </footer>
  </div>
</template>

<style>
html,
body {
  margin: 0;
  height: 100%;
  overflow: hidden;
}
</style>

<style scoped>
* {
  box-sizing: border-box;
}
.app {
  height: 100vh;
  display: grid;
  grid-template-rows: auto auto 1fr auto;
  font-family: 'Open Sans', 'Noto Sans', sans-serif;
  font-size: 9px;
  line-height: 12px;
  color: #4b4b4b;
  background: #f0f0f0;
}
.defs {
  position: absolute;
}
button {
  font: inherit;
  color: inherit;
  border: 0;
  padding: 0;
  margin: 0;
  background: none;
  display: flex;
  align-items: center;
  justify-content: center;
}
.icon,
svg {
  display: block;
  flex: none;
}
.arrow {
  display: inline-block;
  border: 3px solid transparent;
  border-top: 4px solid #444;
  border-bottom: 0;
}
.top {
  display: grid;
  grid-template-columns: 30px 1fr;
  grid-template-rows: 19px 15px;
  background: #3c3c3c;
}
.appbtn {
  grid-row: 1 / 3;
  position: relative;
  overflow: hidden;
  background: linear-gradient(#b2b2b2, #8c8c8c 60%, #777);
  border-right: 1px solid #444;
  margin-bottom: 2px;
}
.appbtn span {
  position: absolute;
  right: 2px;
  bottom: 0;
  font-size: 7px;
  line-height: 9px;
  color: #222;
}
.titlebar {
  display: flex;
  background: linear-gradient(#929292, #707070 60%, #4e4e4e);
}
.qat {
  width: 290px;
  display: flex;
  align-items: center;
  border-right: 1px solid #444;
  background: linear-gradient(#6c6c6c, #565656);
  padding-left: 5px;
}
.qat button {
  flex: 1;
  gap: 3px;
}
.dot {
  width: 2px;
  height: 2px;
  background: #333;
}
.drop {
  position: relative;
  display: flex;
  align-items: center;
}
.drop select {
  appearance: none;
  flex: 1;
  width: 100%;
  border: 0;
  padding: 0 8px 0 2px;
  font: inherit;
  color: #444;
  background: none;
}
.drop .arrow {
  position: absolute;
  right: 3px;
  pointer-events: none;
}
.mat {
  width: 79px;
  height: 16px;
  margin-left: 2px;
  background: #eee;
}
.mat select {
  padding-left: 16px;
}
.qat button.cross {
  flex: none;
  width: 20px;
}
.qat button.cust {
  flex: none;
  width: 8px;
  margin-right: 2px;
}
h1 {
  flex: 1;
  margin: 0;
  font-size: 9px;
  line-height: 19px;
  font-weight: 400;
  color: #e4e4e4;
  display: flex;
  justify-content: center;
  gap: 12px;
  white-space: nowrap;
}
.info {
  width: 263px;
  display: flex;
  align-items: center;
  gap: 5px;
  border: solid #333;
  border-width: 0 1px;
  background: linear-gradient(#777, #4c4c4c);
}
.info .tri {
  width: 5px;
  margin-left: 3px;
}
.info input {
  width: 143px;
  height: 17px;
  border: 0;
  padding: 0 2px;
  margin-left: -2px;
  font: italic 9px 'Open Sans', sans-serif;
  background: #f4f4f4;
}
.info input::placeholder {
  color: #777;
}
.info .find,
.info .help {
  gap: 3px;
}
.wc {
  width: 51px;
  display: flex;
  align-items: center;
  justify-content: flex-end;
  gap: 5px;
}
.tabs {
  display: flex;
  padding-left: 1px;
}
.tabs button {
  padding: 0 8px;
  color: #f6f6f6;
  white-space: nowrap;
}
.tabs button.on {
  margin-right: 2px;
  background: linear-gradient(#fff, #eee);
  color: #3a3a3a;
}
.tabs .min {
  padding-left: 17px;
}

.ribbon {
  display: flex;
  height: 80px;
  border-bottom: 1px solid #7f95ab;
  white-space: nowrap;
}
.panel {
  flex: none;
  display: flex;
  flex-direction: column;
  border-right: 1px solid #b4b4b4;
  background: #f4f4f4;
}
.rest-fill {
  flex: 1;
  background: linear-gradient(#8a8a8a, #c8c8c8);
}
.body {
  height: 63px;
  display: flex;
  padding-top: 3px;
  background: linear-gradient(#ebebeb, #f6f6f6 50%, #fdfdfd);
}
h2 {
  margin: 0;
  flex: 1;
  font-size: 9px;
  font-weight: 400;
  line-height: 15px;
  border-top: 1px solid #d0d0d0;
  background: #f0f0f0;
  display: flex;
  align-items: center;
  justify-content: center;
  gap: 5px;
}
.big {
  flex: none;
  flex-direction: column;
  justify-content: flex-start;
  position: relative;
}
.big span {
  line-height: 13px;
}
.big .icon,
.big svg {
  margin-bottom: 2px;
}
.big .arrow {
  position: absolute;
  right: 1px;
  bottom: 13px;
  border-width: 2px;
  border-top-width: 2px;
}
.fx text {
  font-family: 'Liberation Serif', serif;
  font-style: italic;
  fill: #3c3c3c;
  stroke: #3c3c3c;
  stroke-width: 1px;
}
.rows,
.smalls {
  display: grid;
  grid-template-rows: repeat(3, 18px);
  grid-auto-flow: column;
  row-gap: 1px;
  align-content: start;
}
.rows button {
  justify-content: flex-start;
  gap: 3px;
}
.smalls {
  column-gap: 2px;
}
.smalls button,
.sq {
  width: 17px;
  height: 18px;
  border: 1px solid #d4d8dc;
  background: #fafafa;
}
.sketch { width: 62px; }
.panel.sketch .big { width: 58px; }
.create { width: 197px; }
.create .big { width: 43px; }
.create .body { padding-left: 1px; }
.create .rows { grid-auto-columns: 51px; margin-left: 4px; }
.modify { width: 133px; }
.modify .body { padding-left: 1px; }
.modify .big { width: 37px; }
.modify .smalls { margin-left: 1px; }
.work { width: 67px; }
.work .big { width: 40px; }
.work .smalls { justify-items: start; }
.work .smalls .point { width: 25px; gap: 3px; }
.work .point .arrow { border-width: 2px; border-top-width: 2px; }
.pattern { width: 23px; }
.pattern .body { padding-left: 2px; }
.surface { width: 44px; }
.surface .body { padding-left: 3px; }
.surface .smalls { column-gap: 5px; }
.params { width: 62px; }
.params .big { width: 61px; }
.plastic { width: 41px; }
.plastic .body { padding-left: 3px; }
.measure { width: 99px; }
.measure .big { width: 52px; }
.insert { width: 142px; }
.insert .big { width: 42px; }
.insert .smalls { width: 19px; }
.harness { width: 22px; }
.harness .body { padding-left: 2px; }
.sim { width: 50px; }
.sim .big { width: 49px; }
.convert { width: 65px; }
.convert .big { width: 64px; }
.combo {
  display: flex;
  flex-direction: column;
  gap: 1px;
}
.pick {
  width: 78px;
  height: 18px;
  padding-left: 2px;
  border: 1px solid #d4d8dc;
  background: #fafafa;
}

main {
  display: flex;
  min-height: 0;
}
aside {
  width: 192px;
  display: flex;
  flex-direction: column;
  background: #f0f0f0;
  font-family: 'DejaVu Sans Condensed', 'DejaVu Sans', sans-serif;
  color: #1c1c1c;
}
.grip {
  height: 13px;
  display: flex;
  align-items: center;
  gap: 3px;
}
.grip span {
  width: 180px;
  height: 3px;
  border: 1px solid #b0b0b0;
  border-left: 0;
}
.mhead {
  height: 16px;
  display: flex;
  justify-content: space-between;
  align-items: center;
  margin-right: 1px;
  padding: 0 3px 0 6px;
  background: #ababab;
}
.mtitle {
  color: #fff;
  font-weight: bold;
  gap: 4px;
}
.mtitle .arrow {
  border-top-color: #fff;
}
.q {
  width: 11px;
  height: 12px;
  border: 1px solid #222;
  border-radius: 2px;
  background: #fbf9d8;
  font-weight: bold;
}
.mtools {
  height: 22px;
  display: flex;
  align-items: center;
  padding-left: 2px;
}
.mtools button + button {
  margin-left: 5px;
  padding-left: 7px;
  height: 14px;
  border-left: 1px solid #777;
}
.treebox {
  flex: 1;
  margin: 0 1px 3px 0;
  background: #fff;
  border: solid #7d7d7d;
  border-width: 1px 1px 1px 0;
}
.tree {
  list-style: none;
  margin: 0;
  padding: 0;
  height: 158px;
  display: grid;
  grid-auto-rows: 1fr;
}
.tree li {
  position: relative;
  display: flex;
  align-items: center;
  padding-left: 3px;
  min-height: 0;
}
.tree li > span {
  padding-left: 1px;
}
.tree .l1 {
  padding-left: 19px;
}
.tree .l2 {
  padding-left: 34px;
}
.tree .l1::before,
.tree .l2::before {
  content: '';
  position: absolute;
  left: 7px;
  top: 0;
  bottom: 0;
  border-left: 1px solid #9a9a9a;
}
.tree .last::before {
  bottom: 7px;
}
.tree .l1::after,
.tree .l2::after {
  content: '';
  position: absolute;
  left: 7px;
  top: 7px;
  width: 9px;
  border-top: 1px solid #9a9a9a;
}
.tree .l2::after {
  left: 22px;
  top: 0;
  height: 8px;
  border: solid #9a9a9a;
  border-width: 0 0 1px 1px;
}
.box {
  position: absolute;
  z-index: 1;
  left: 3px;
  top: 3px;
  width: 9px;
  height: 9px;
  border: 1px solid #888;
  background: #fff;
  font-size: 8px;
  line-height: 7px;
}
.view {
  flex: 1;
  min-width: 0;
  position: relative;
  margin-left: 1px;
  border-left: 2px solid #9fa9b3;
  background: #336596;
}
.scene {
  width: 100%;
  height: 100%;
}
.carve {
  font-family: 'Noto Sans', 'Open Sans', sans-serif;
  fill: #b9babd;
  stroke: #d0d1d2;
  stroke-width: 1px;
}
.docwc {
  position: absolute;
  top: 4px;
  right: 3px;
  display: flex;
  gap: 7px;
}
.cube {
  position: absolute;
  top: 16px;
  right: 4px;
  font-family: 'Liberation Sans', sans-serif;
}
.navbar {
  position: absolute;
  top: 104px;
  right: 0;
  width: 25px;
  height: 150px;
  display: flex;
  flex-direction: column;
  align-items: center;
  gap: 5px;
  padding-top: 2px;
  background: #aabdd3;
  border: 1px solid #bccadb;
}
.navbar .arrow {
  border-width: 2px;
  border-top-width: 2px;
}
.navbar hr {
  width: 18px;
  margin: 0;
  border: 0;
  border-top: 1px solid #5d7490;
}
.navbar .nx,
.navbar .end {
  align-self: flex-end;
  margin-right: 1px;
}
.triad {
  position: absolute;
  left: 8px;
  bottom: 38px;
  font-family: 'Liberation Sans', sans-serif;
}
footer {
  height: 14px;
  display: flex;
  align-items: stretch;
  line-height: 13px;
  color: #222;
  border-top: 1px solid #c9c9c9;
  background: linear-gradient(#f8f8f8, #bdbdbd);
}
footer span:first-child {
  flex: 1;
}
.n {
  width: 31px;
  text-align: center;
}
.green {
  width: 12px;
  margin-left: 8px;
  background: #009a00;
}
.dark {
  width: 14px;
  background: linear-gradient(#444, #000);
}
</style>
